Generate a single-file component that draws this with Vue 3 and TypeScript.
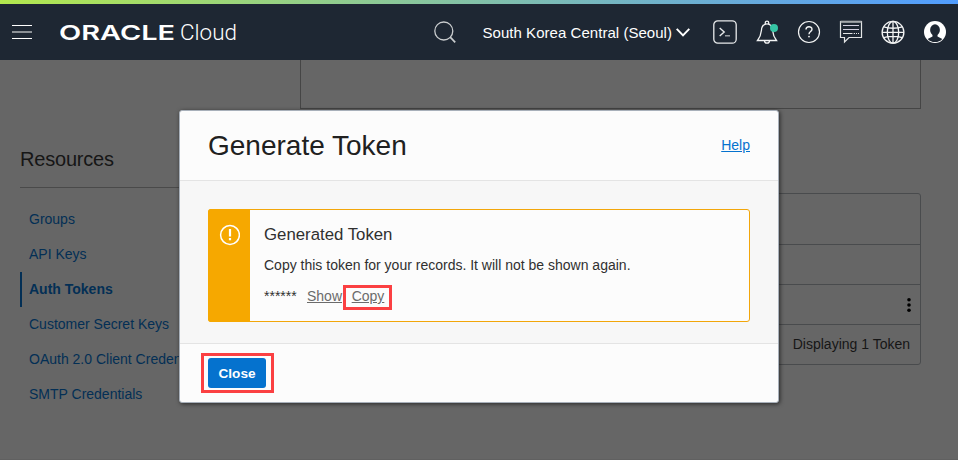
<script setup lang="ts">
interface NavItem {
  label: string
  active?: boolean
}

const resources: NavItem[] = [
  { label: 'Groups' },
  { label: 'API Keys' },
  { label: 'Auth Tokens', active: true },
  { label: 'Customer Secret Keys' },
  { label: 'OAuth 2.0 Client Credentials' },
  { label: 'SMTP Credentials' },
]
</script>

<template>
  <div class="page">
    <header class="topbar">
      <button class="icon-btn menu" aria-label="Menu">
        <svg width="20" height="16" viewBox="0 0 20 16">
          <path d="M0 1.5H20M0 14.5H20" stroke="#fff" />
          <path d="M0 8H20" stroke="#8b9095" stroke-width="2" />
        </svg>
      </button>
      <svg class="brand" width="180" height="26" viewBox="0 0 180 26" fill="#fff">
        <text class="brand-name" x="-1" y="21" textLength="116" lengthAdjust="spacingAndGlyphs">ORACLE</text>
        <text class="brand-product" x="120" y="21" textLength="57" lengthAdjust="spacingAndGlyphs">Cloud</text>
      </svg>
      <button class="icon-btn search" aria-label="Search">
        <svg width="24" height="24" viewBox="0 0 24 24" fill="none" stroke="#c9ccce" stroke-width="1.3">
          <circle cx="10.8" cy="11" r="9" />
          <path d="M17.2 17.2L22.2 22.4" stroke-width="1.7" />
        </svg>
      </button>
      <div class="region">
        <span>South Korea Central (Seoul)</span>
        <svg width="14" height="9" viewBox="0 0 14 9" fill="none" stroke="#fff" stroke-width="2">
          <path d="M.7 .9L7 7.4L13.3 .9" />
        </svg>
      </div>
      <nav class="tools">
        <svg width="24" height="24" viewBox="0 0 24 24" fill="none" stroke="#e8eaeb" stroke-width="1.3">
          <rect x=".8" y=".8" width="22.4" height="22.4" rx="4" />
          <path d="M6.7 8L11.2 12L6.7 16" stroke-width="1.4" />
          <path d="M12 15.8H17" stroke="#aeb2b5" />
        </svg>
        <svg width="24" height="24" viewBox="0 0 24 24" fill="none" stroke="#f3f4f4" stroke-width="1.3">
          <path d="M2.5 20.5C5 17.2 6 15 6.4 10.5C6.8 5.8 8.2 3.8 12 3.8S17.2 5.8 17.6 10.5C18 15 19 17.2 21.5 20.5Z" />
          <path d="M10.3 3.9V2.7C10.3 .7 13.7 .7 13.7 2.7V3.9M9.5 20.7C9.5 24 14.5 24 14.5 20.7" />
          <circle cx="19" cy="8" r="4" fill="#36c5a5" stroke="none" />
        </svg>
        <svg width="24" height="24" viewBox="0 0 24 24" fill="none" stroke="#f3f4f4" stroke-width="1.2">
          <circle cx="12" cy="12" r="10.5" />
          <path d="M9 9.6C9 5.9 15 5.9 15 9.2C15 11.5 12 11.6 12 14.2" stroke-width="1.4" />
          <circle cx="12" cy="16.6" r=".9" fill="#f3f4f4" stroke="none" />
        </svg>
        <svg width="24" height="24" viewBox="0 0 24 24" fill="none" stroke="#e3e5e6" stroke-width="1.2">
          <path d="M1.5 1.7H22.5V17.5H10L5.5 22V17.5H1.5Z" />
          <path d="M1.5 1.7H22.5" stroke="#a5a9ad" stroke-width="2" />
          <path d="M4 5.5H20M4 9.5H20" stroke="#d2cfe0" />
          <path d="M4 13.5H13.5M14.7 13.5H16M17 13.5H18M19 13.5H20" />
        </svg>
        <svg width="24" height="24" viewBox="0 0 24 24" fill="none" stroke="#f3f4f4" stroke-width="1.3">
          <circle cx="12" cy="12.3" r="10.9" />
          <ellipse cx="12" cy="12.3" rx="5.7" ry="10.9" />
          <path d="M12 1.3V23.3M1 12.3H23M2.8 6.9C7.5 8.7 16.5 8.7 21.2 6.9M2.8 17.7C7.5 15.9 16.5 15.9 21.2 17.7" />
        </svg>
        <svg width="24" height="24" viewBox="0 0 24 24">
          <circle cx="12" cy="12" r="11" fill="#fff" />
          <ellipse cx="12" cy="10" rx="4.9" ry="5.7" fill="#1e2733" />
          <path d="M9.5 14H14.5V16.4L19.3 19C17.3 21.2 15 22.1 12 22.1S6.7 21.2 4.7 19L9.5 16.4Z" fill="#1e2733" />
        </svg>
      </nav>
    </header>

    <main class="content">
      <aside class="sidebar">
        <h2>Resources</h2>
        <ul>
          <li v-for="item in resources" :key="item.label" :class="{ active: item.active }">{{ item.label }}</li>
        </ul>
      </aside>
      <section class="details">
        <div class="summary"></div>
        <div class="table">
          <div class="row toolbar"></div>
          <div class="row head"></div>
          <div class="row">
            <svg width="6" height="16" viewBox="0 0 6 16" fill="#000">
              <circle cx="3" cy="2.7" r="1.8" />
              <circle cx="3" cy="8" r="1.8" />
              <circle cx="3" cy="13.2" r="1.8" />
            </svg>
          </div>
          <div class="row foot"><span>Displaying 1 Token</span></div>
        </div>
      </section>
    </main>

    <div class="dialog" role="dialog">
      <div class="dialog-head">
        <h1>Generate Token</h1>
        <a class="help">Help</a>
      </div>
      <div class="dialog-body">
        <div class="notice">
          <div class="notice-flag">
            <svg width="22" height="22" viewBox="0 0 22 22" fill="none" stroke="#fff">
              <circle cx="12" cy="11" r="9.4" stroke-width="1.5" />
              <path d="M12 5V12.5M12 14V16.2" stroke-width="2.2" />
            </svg>
          </div>
          <div class="notice-text">
            <h3>Generated Token</h3>
            <p>Copy this token for your records. It will not be shown again.</p>
            <div class="token">
              <span class="mask">******</span>
              <a class="show">Show</a>
              <span class="mark copy-mark"><a>Copy</a></span>
            </div>
          </div>
        </div>
      </div>
      <div class="dialog-foot">
        <span class="mark close-mark"><button class="close">Close</button></span>
      </div>
    </div>
  </div>
</template>

<style>
body {
  margin: 0;
  background: #666;
}
</style>

<style scoped>
* {
  box-sizing: border-box;
}
h1, h2, h3, p, ul {
  margin: 0;
  padding: 0;
  font-weight: 400;
}
svg {
  display: block;
  flex: none;
}
.page {
  position: relative;
  width: 958px;
  height: 460px;
  overflow: hidden;
  background: #666;
  border-bottom: 1px solid #606060;
  font-family: "Liberation Sans", Arial, sans-serif;
  font-size: 14px;
  color: #161616;
}
.topbar {
  display: flex;
  align-items: center;
  height: 60px;
  padding: 4px 11px 0 12px;
  background: linear-gradient(90deg, #b3e84e, #65a9df 80%, #519dff) top / 100% 4px no-repeat, #1e2733;
}
.icon-btn {
  padding: 0;
  border: 0;
  background: none;
}
.brand {
  margin-left: 28px;
}
.brand-name {
  font-family: Inter, "Liberation Sans", sans-serif;
  font-size: 20.5px;
  font-weight: 600;
}
.brand-product {
  font-family: Roboto, sans-serif;
  font-size: 22.5px;
  font-weight: 300;
}
.search {
  margin-left: 193px;
}
.region {
  display: flex;
  align-items: center;
  gap: 4px;
  margin-left: 25px;
  font-size: 15px;
  letter-spacing: .04px;
  color: #fff;
  white-space: nowrap;
}
.region span {
  width: 190px;
  padding-left: .5px;
}
.tools {
  display: flex;
  gap: 18px;
  margin-left: auto;
}
.content {
  display: flex;
  gap: 20px;
  padding: 0 37px 0 20px;
}
.sidebar {
  width: 260px;
  padding-top: 88px;
}
.sidebar h2 {
  height: 40px;
  border-bottom: 1px solid #4a4a4a;
  font-size: 20px;
  line-height: 23px;
  letter-spacing: -.2px;
}
.sidebar ul {
  padding-top: 14px;
  list-style: none;
}
.sidebar li {
  height: 35px;
  padding-left: 9px;
  line-height: 34px;
  color: #032f55;
  white-space: nowrap;
}
.sidebar li.active {
  padding-left: 7px;
  border-left: 2px solid #032f55;
  font-weight: 700;
}
.details {
  flex: 1;
}
.summary {
  height: 49px;
  border: 1px solid #454545;
  border-top: 0;
}
.table {
  margin-top: 84px;
  border: 1px solid #494b4d;
  border-radius: 3px;
}
.row {
  display: flex;
  align-items: center;
  justify-content: flex-end;
  height: 40px;
  padding-right: 8px;
  border-bottom: 1px solid #494b4d;
}
.row.toolbar {
  height: 51px;
}
.row.foot {
  height: 39px;
  padding: 0 10px 2px 0;
  border-bottom: 0;
}
.dialog {
  position: absolute;
  left: 179px;
  top: 110px;
  display: flex;
  flex-direction: column;
  width: 600px;
  height: 293px;
  border: 1px solid #a8b0ba;
  border-radius: 3px;
  background: #fcfcfc;
  box-shadow: 1px 1px 4px rgba(0, 0, 0, .6);
}
.dialog-head {
  display: flex;
  align-items: center;
  justify-content: space-between;
  height: 70px;
  padding: 0 28px;
  border-bottom: 1px solid #e4e4e4;
}
.dialog-head h1 {
  font-size: 28px;
  color: #202020;
}
.dialog a {
  text-decoration: underline;
}
.help {
  padding-bottom: 2px;
  color: #0572ce;
}
.dialog-body {
  height: 163px;
  padding: 28px;
  border-bottom: 1px solid #e4e4e4;
  background: #f7f7f7;
}
.notice {
  display: flex;
  height: 113px;
  border: 1px solid #f2a60a;
  border-radius: 3px;
  background: #fcfcfc;
}
.notice-flag {
  display: flex;
  justify-content: center;
  width: 42px;
  margin: -1px 0 -1px -1px;
  padding-top: 15px;
  border-radius: 3px 0 0 3px;
  background: #f6a800;
}
.notice-text {
  flex: 1;
  padding: 15px 0 0 14px;
  color: #303030;
}
.notice-text h3 {
  font-size: 16.8px;
  line-height: 20px;
}
.notice-text p {
  padding-top: 11px;
  line-height: 18px;
}
.token {
  display: flex;
  align-items: center;
  height: 25px;
  margin-top: 11px;
  color: #6b6b6b;
}
.mask {
  width: 43px;
  padding-bottom: 3px;
  color: #303030;
}
.show {
  width: 36px;
  padding-bottom: 3px;
}
.mark {
  display: flex;
  align-items: center;
  justify-content: center;
  border: 3px solid #fb4042;
}
.copy-mark {
  width: 49px;
  height: 25px;
  padding: 0 0 3px 1px;
}
.dialog-foot {
  padding: 9px 21px;
}
.close-mark {
  width: 73px;
  height: 40px;
  padding-right: 1px;
}
.close {
  width: 58px;
  height: 30px;
  padding: 0;
  border: 0;
  border-radius: 3px;
  background: #0572ce;
  color: #fff;
  font: 700 13.6px "Liberation Sans", Arial, sans-serif;
}
</style>
